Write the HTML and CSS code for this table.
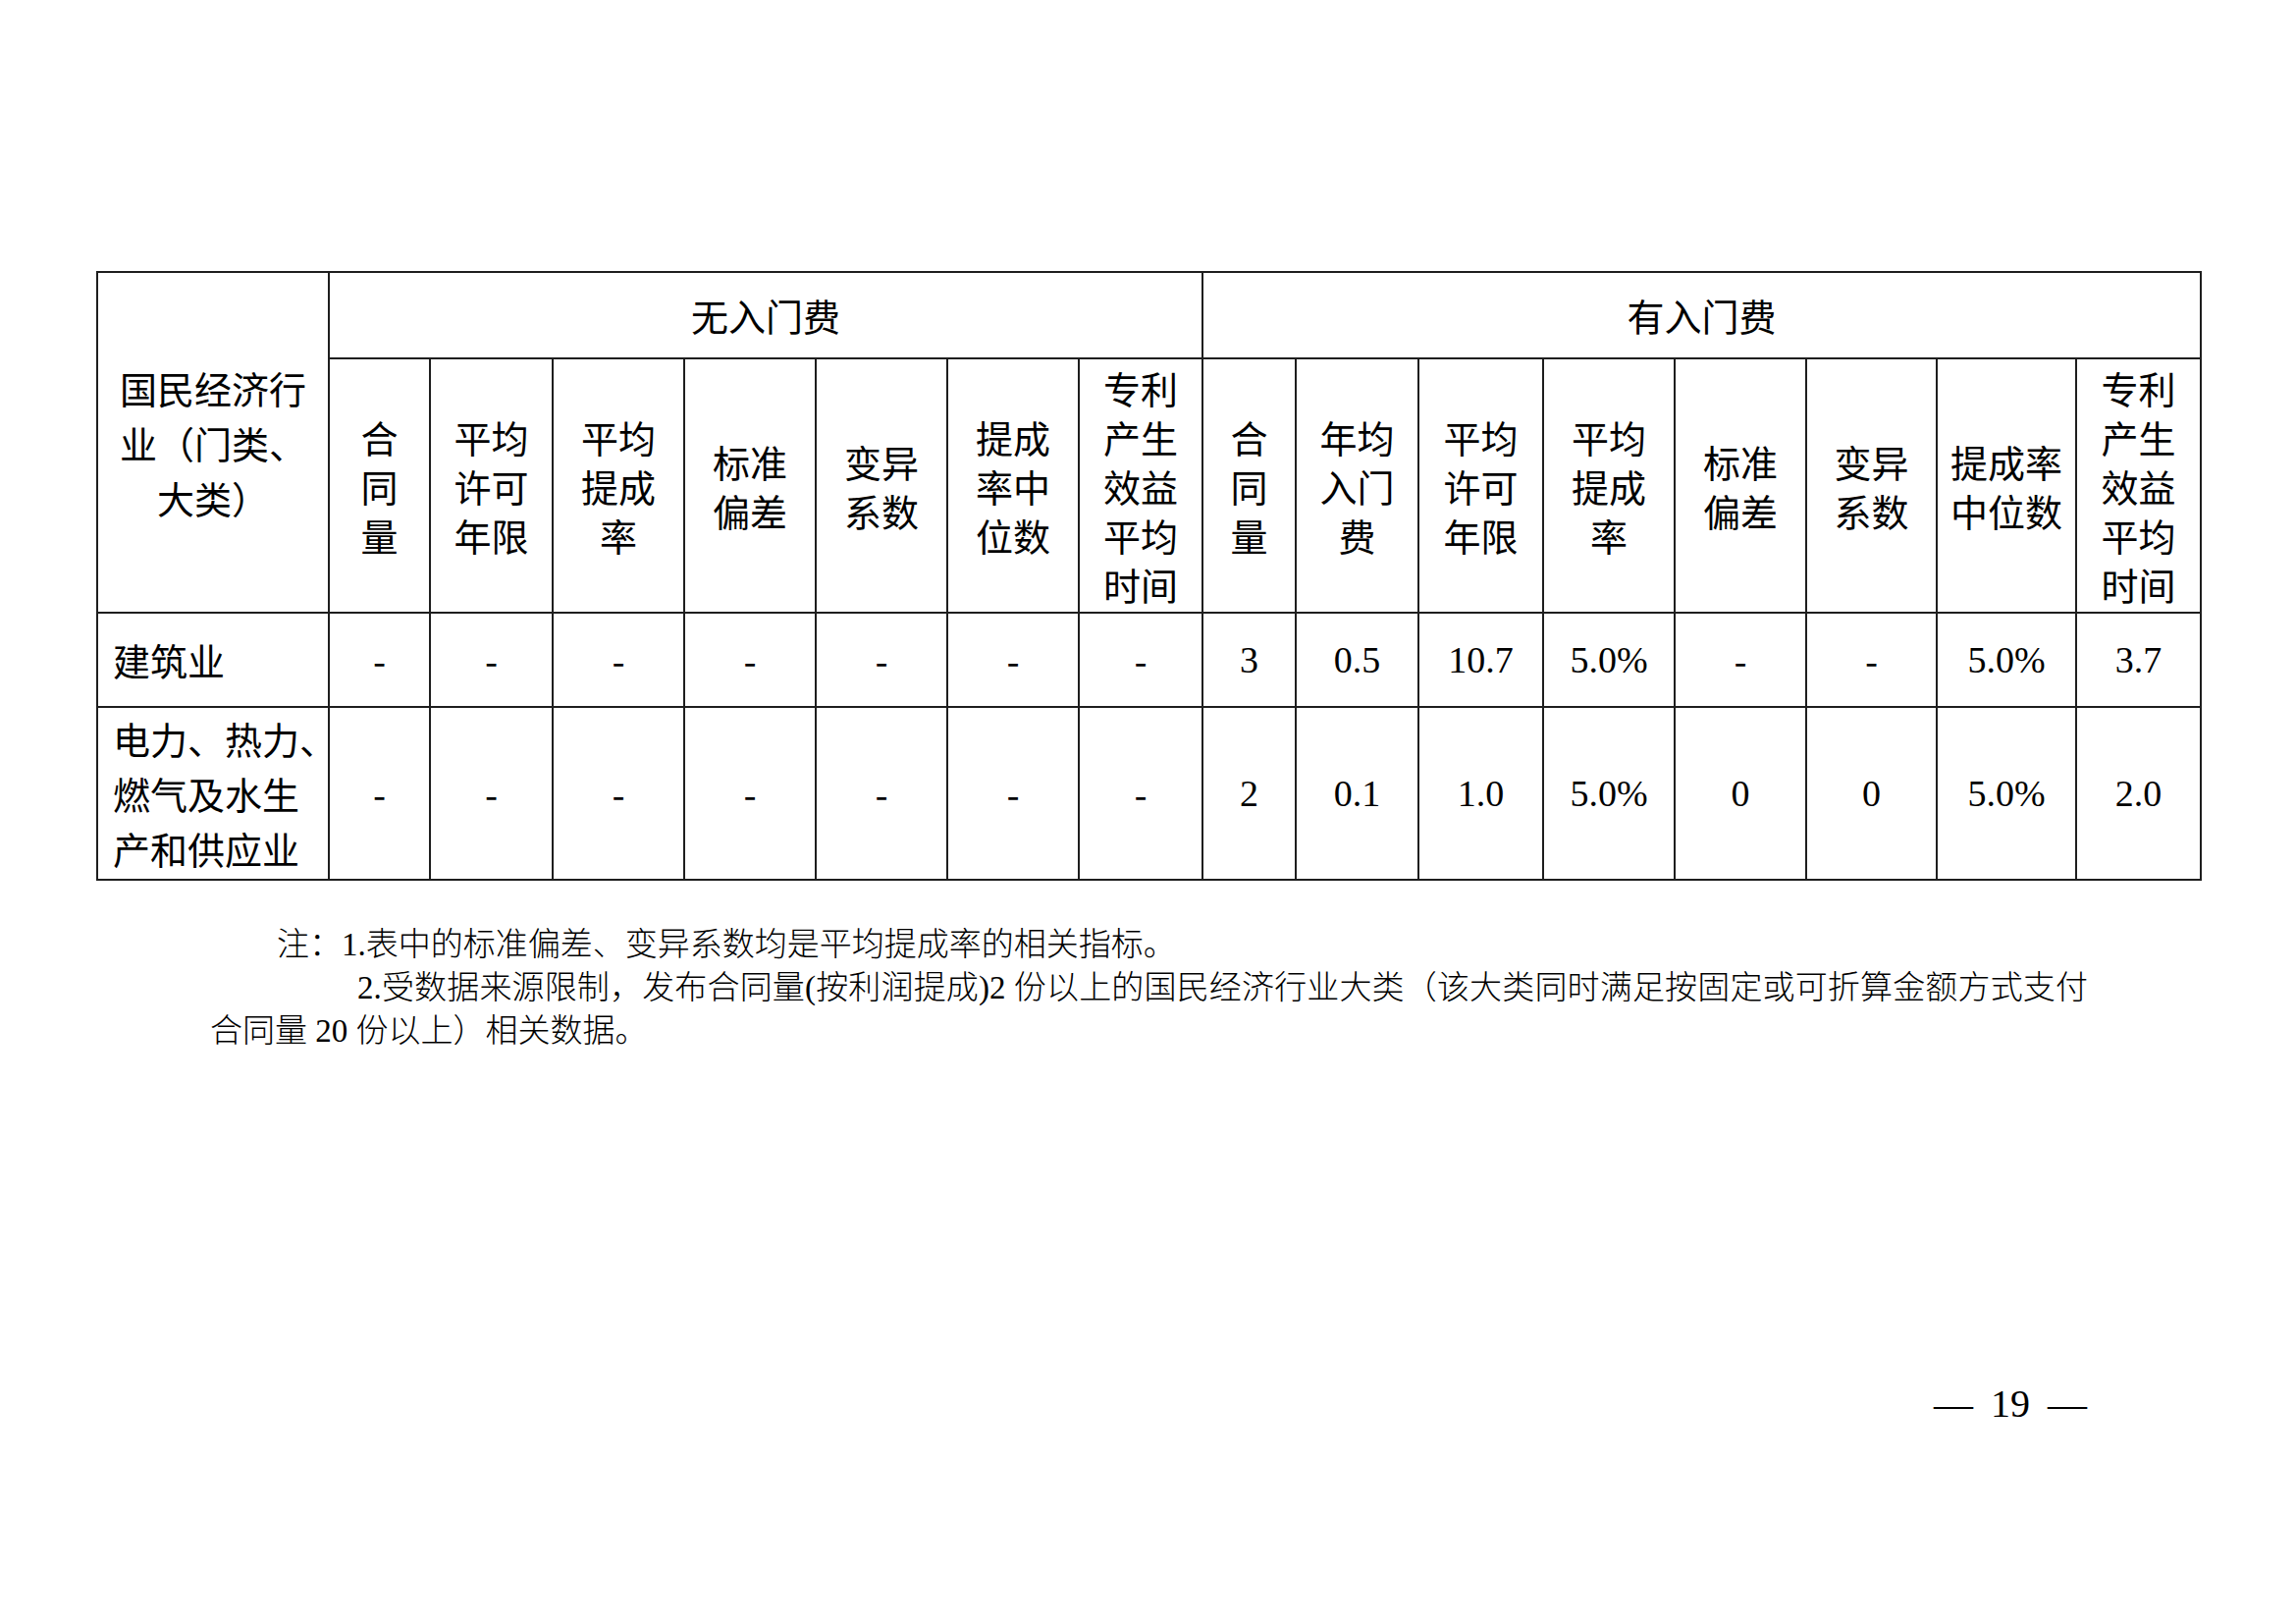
FILE: index.html
```html
<!DOCTYPE html>
<html lang="zh-CN">
<head>
<meta charset="utf-8">
<title>表</title>
<link rel="stylesheet" href="styles.css">
</head>
<body>
<div class="page">
  <table class="data">
    <colgroup>
      <col class="c236"><col class="c103"><col class="c125"><col class="c134"><col class="c134"><col class="c134"><col class="c134"><col class="c126">
      <col class="c95"><col class="c125"><col class="c127"><col class="c134"><col class="c134"><col class="c133"><col class="c142"><col class="c127">
    </colgroup>
    <tr class="r1">
      <th rowspan="2" class="lead">国民经济行<br>业（门类、<br>大类）</th>
      <th colspan="7">无入门费</th>
      <th colspan="8">有入门费</th>
    </tr>
    <tr class="r2">
      <th>合<br>同<br>量</th>
      <th>平均<br>许可<br>年限</th>
      <th>平均<br>提成<br>率</th>
      <th>标准<br>偏差</th>
      <th>变异<br>系数</th>
      <th>提成<br>率中<br>位数</th>
      <th>专利<br>产生<br>效益<br>平均<br>时间</th>
      <th>合<br>同<br>量</th>
      <th>年均<br>入门<br>费</th>
      <th>平均<br>许可<br>年限</th>
      <th>平均<br>提成<br>率</th>
      <th>标准<br>偏差</th>
      <th>变异<br>系数</th>
      <th>提成率<br>中位数</th>
      <th>专利<br>产生<br>效益<br>平均<br>时间</th>
    </tr>
    <tr class="r3">
      <td class="name">建筑业</td>
      <td>-</td><td>-</td><td>-</td><td>-</td><td>-</td><td>-</td><td>-</td>
      <td class="num">3</td><td class="num">0.5</td><td class="num">10.7</td><td class="num">5.0%</td>
      <td>-</td><td>-</td><td class="num">5.0%</td><td class="num">3.7</td>
    </tr>
    <tr class="r4">
      <td class="name">电力、热力、<br>燃气及水生<br>产和供应业</td>
      <td>-</td><td>-</td><td>-</td><td>-</td><td>-</td><td>-</td><td>-</td>
      <td class="num">2</td><td class="num">0.1</td><td class="num">1.0</td><td class="num">5.0%</td>
      <td class="num">0</td><td class="num">0</td><td class="num">5.0%</td><td class="num">2.0</td>
    </tr>
  </table>

  <div class="notes">
    <div class="note1">注：1.表中的标准偏差、变异系数均是平均提成率的相关指标。</div>
    <div class="note2">2.受数据来源限制，发布合同量(按利润提成)2 份以上的国民经济行业大类（该大类同时满足按固定或可折算金额方式支付</div>
    <div class="note3">合同量 20 份以上）相关数据。</div>
  </div>

  <div class="pagenum">
    <span class="dash">—</span><span class="pn">19</span><span class="dash">—</span>
  </div>
</div>
</body>
</html>
```

FILE: styles.css
```css
html, body {
  margin: 0;
  padding: 0;
  background: #ffffff;
}

.page {
  width: 2339px;
  height: 1654px;
  box-sizing: border-box;
  padding: 276px 0 0 98px;
  color: #000;
}

.data {
  border-collapse: collapse;
  table-layout: fixed;
  width: 2143px;
  font-family: "Noto Sans CJK SC", "Noto Sans", sans-serif;
  font-size: 38px;
  color: #000;
}

.c236 { width: 236px; }
.c103 { width: 103px; }
.c125 { width: 125px; }
.c126 { width: 126px; }
.c127 { width: 127px; }
.c133 { width: 133px; }
.c134 { width: 134px; }
.c142 { width: 142px; }
.c95 { width: 95px; }

.data th,
.data td {
  border: 2px solid #1e1e1e;
  padding: 0;
  text-align: center;
  vertical-align: middle;
  font-weight: 400;
  line-height: 50px;
}

.r1 { height: 88px; }
.r2 { height: 259px; }
.r3 { height: 96px; }
.r4 { height: 176px; }

.data th.lead {
  line-height: 56px;
}

.data td.name {
  text-align: left;
  padding-left: 15px;
  line-height: 56px;
  white-space: nowrap;
}

.data td.num {
  font-family: "Liberation Serif", "Times New Roman", serif;
  font-size: 38px;
}

.notes {
  width: 1913px;
  margin: 43px 0 0 116px;
  font-family: "Liberation Serif", "Noto Sans CJK SC", serif;
  font-size: 33px;
  line-height: 44px;
  font-weight: 300;
}

.note1 {
  padding-left: 68px;
}

.note2 {
  padding-left: 150px;
  text-align: justify;
  text-align-last: justify;
}

.pagenum {
  margin-top: 333px;
  padding-left: 1872px;
  display: flex;
  align-items: center;
  gap: 18px;
  font-family: "Liberation Serif", "Times New Roman", serif;
  font-size: 40px;
  line-height: 50px;
}
```
